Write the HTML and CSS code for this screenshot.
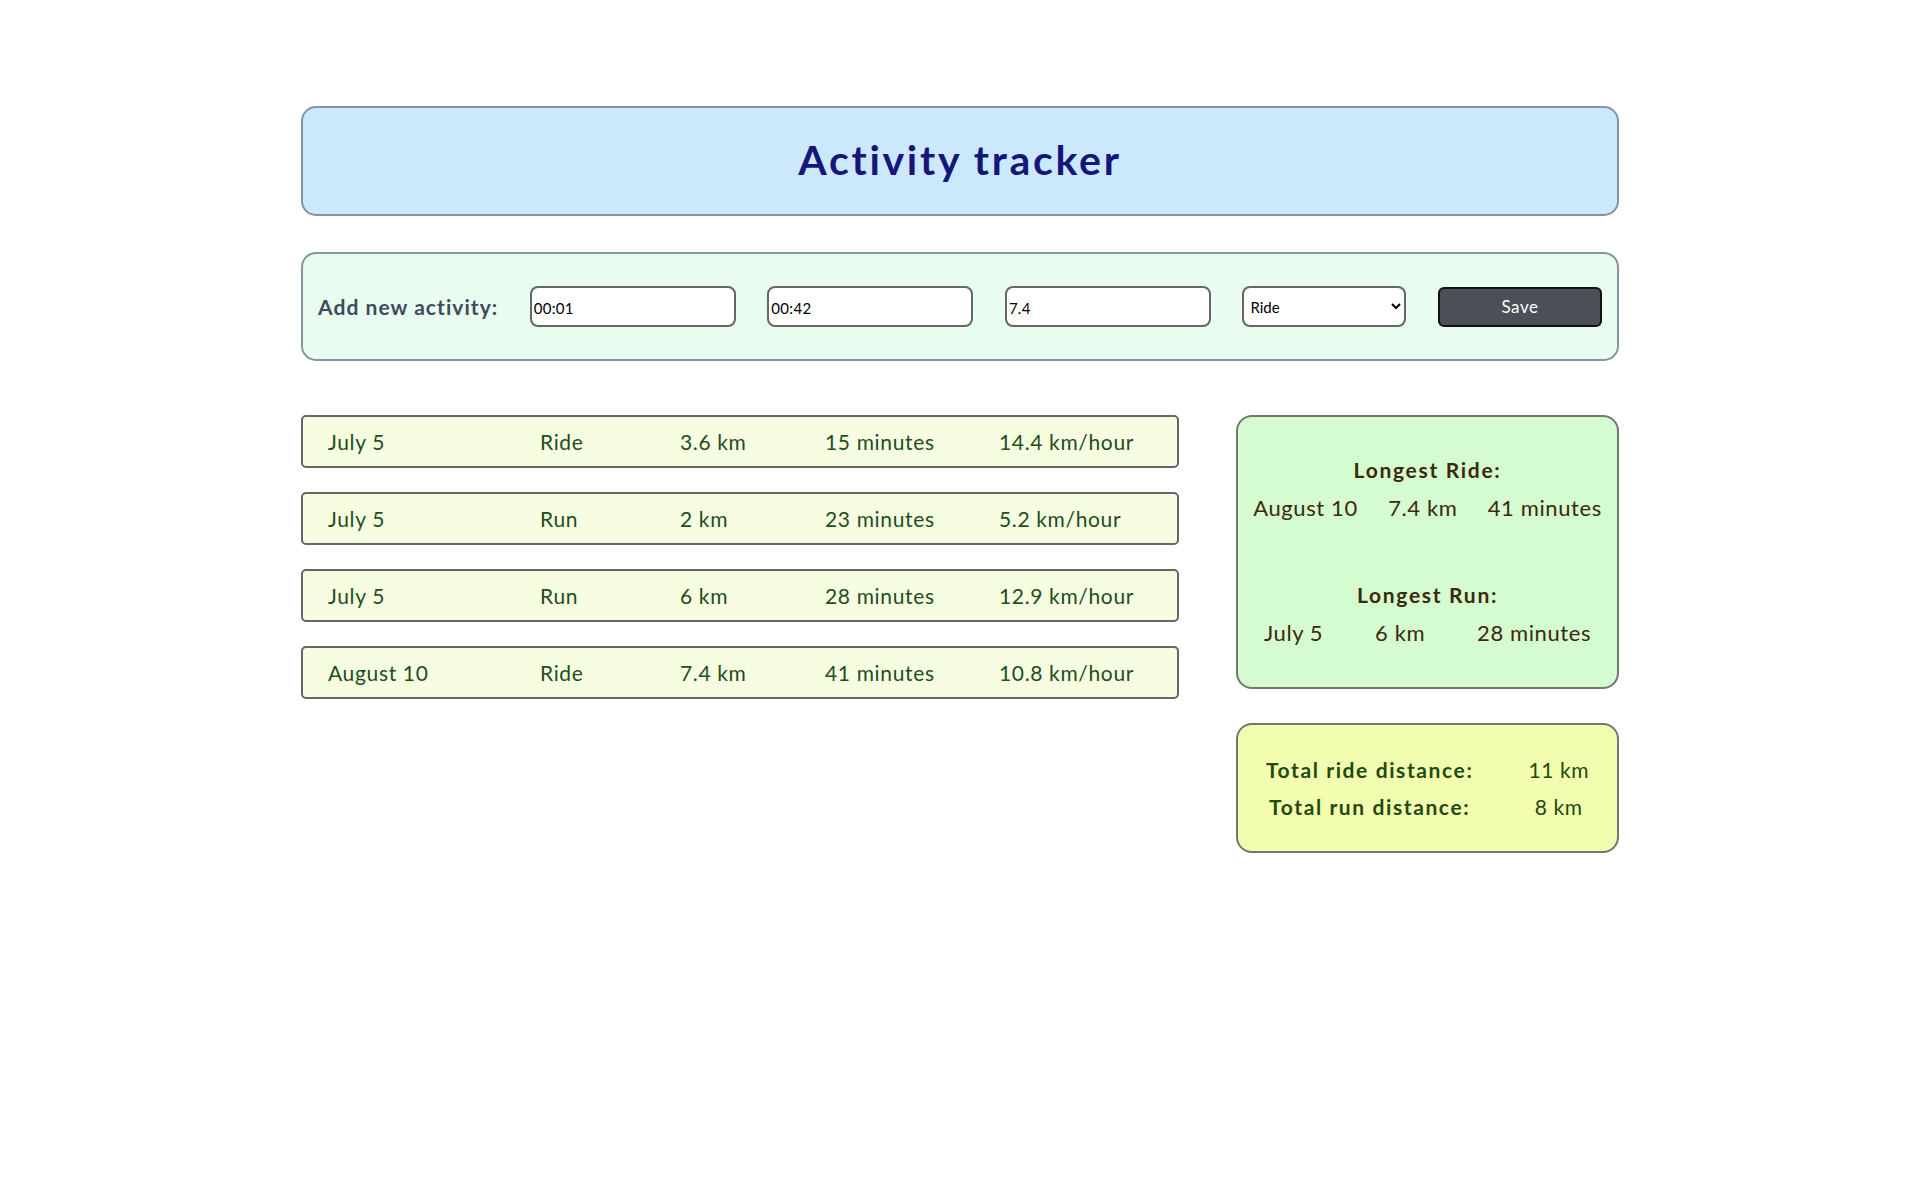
FILE: index.html
```html
<!DOCTYPE html>
<html lang="en">
<head>
<meta charset="utf-8">
<title>Activity tracker</title>
<link rel="stylesheet" href="styles.css">
</head>
<body>
<div class="app">
  <header class="header">
    <h1 class="title">Activity tracker</h1>
  </header>

  <form class="add-form">
    <label class="add-label">Add new activity:</label>
    <input class="field" type="text" value="00:01">
    <input class="field" type="text" value="00:42">
    <input class="field" type="text" value="7.4">
    <select class="select">
      <option>Ride</option>
      <option>Run</option>
    </select>
    <button class="save" type="button">Save</button>
  </form>

  <main class="main">
    <section class="list">
      <div class="row"><span>July 5</span><span>Ride</span><span>3.6 km</span><span>15 minutes</span><span>14.4 km/hour</span></div>
      <div class="row"><span>July 5</span><span>Run</span><span>2 km</span><span>23 minutes</span><span>5.2 km/hour</span></div>
      <div class="row"><span>July 5</span><span>Run</span><span>6 km</span><span>28 minutes</span><span>12.9 km/hour</span></div>
      <div class="row"><span>August 10</span><span>Ride</span><span>7.4 km</span><span>41 minutes</span><span>10.8 km/hour</span></div>
    </section>

    <aside class="side">
      <div class="longest">
        <div class="group">
          <div class="group-title">Longest Ride:</div>
          <div class="group-row"><span>August 10</span><span>7.4 km</span><span>41 minutes</span></div>
        </div>
        <div class="group">
          <div class="group-title">Longest Run:</div>
          <div class="group-row"><span>July 5</span><span>6 km</span><span>28 minutes</span></div>
        </div>
      </div>

      <div class="totals">
        <span class="total-label">Total ride distance:</span><span class="total-value">11 km</span>
        <span class="total-label">Total run distance:</span><span class="total-value">8 km</span>
      </div>
    </aside>
  </main>
</div>
</body>
</html>
```

FILE: styles.css
```css
* {
  box-sizing: border-box;
}

body {
  margin: 0;
  background: #ffffff;
  font-family: Lato, "Open Sans", sans-serif;
}

.app {
  width: 1318px;
  margin: 106px auto 0;
}

.header {
  height: 110px;
  background: #cbe8fc;
  border: 2px solid #8793a3;
  border-radius: 15px;
  display: flex;
  align-items: center;
  justify-content: center;
  padding-bottom: 3px;
}

.title {
  margin: 0;
  font-size: 41px;
  font-weight: 700;
  color: #16167a;
  letter-spacing: 2.7px;
}

.add-form {
  margin-top: 36px;
  height: 109px;
  background: #e8fdf0;
  border: 2px solid #8793a3;
  border-radius: 15px;
  display: flex;
  align-items: center;
  justify-content: space-between;
  padding: 0 15px 0 15px;
}

.add-label {
  font-size: 21px;
  font-weight: 700;
  color: #3f4a5c;
  letter-spacing: 1.05px;
}

.field {
  width: 206px;
  height: 41px;
  border: 2px solid #666666;
  border-radius: 8px;
  background: #ffffff;
  padding: 2px 2px 0;
  font-family: Lato, sans-serif;
  font-size: 15px;
  letter-spacing: 0.3px;
  color: #000000;
}

.select {
  width: 164px;
  height: 41px;
  border: 2px solid #666666;
  border-radius: 8px;
  background: #ffffff;
  font-family: Lato, sans-serif;
  font-size: 15px;
  color: #000000;
  padding: 0 2px;
}

.save {
  width: 164px;
  height: 40px;
  background: #4a4f58;
  border: 2px solid #111111;
  border-radius: 6px;
  color: #ffffff;
  font-family: Lato, sans-serif;
  font-size: 17px;
  letter-spacing: 0.5px;
}

.main {
  margin-top: 54px;
  display: flex;
  gap: 57px;
  align-items: flex-start;
}

.list {
  width: 878px;
  display: flex;
  flex-direction: column;
  gap: 24px;
}

.row {
  height: 53px;
  background: #f6fde0;
  border: 2px solid #666666;
  border-radius: 5px;
  display: grid;
  grid-template-columns: 212px 140px 145px 174px 1fr;
  align-items: center;
  padding-left: 25px;
  font-size: 21px;
  letter-spacing: 0.65px;
  color: #1f4d1c;
}

.side {
  width: 383px;
  display: flex;
  flex-direction: column;
  gap: 34px;
}

.longest {
  height: 274px;
  background: #d5fbd0;
  border: 2px solid #707870;
  border-radius: 16px;
  display: flex;
  flex-direction: column;
  justify-content: center;
  gap: 57px;
  color: #3a2a0c;
  padding-bottom: 1px;
}

.group {
  display: flex;
  flex-direction: column;
  gap: 8px;
}

.group-title {
  line-height: 30px;
  text-align: center;
  font-size: 21px;
  font-weight: 700;
  letter-spacing: 1.7px;
}

.group-row {
  line-height: 30px;
  display: flex;
  justify-content: space-around;
  font-size: 22px;
  letter-spacing: 0.6px;
}

.totals {
  height: 130px;
  background: #f2fdb0;
  border: 2px solid #707870;
  border-radius: 16px;
  display: grid;
  grid-template-columns: auto auto;
  justify-content: center;
  align-content: center;
  column-gap: 55px;
  line-height: 37px;
  color: #234a0e;
  font-size: 21px;
  text-align: center;
}

.total-label {
  font-weight: 700;
  letter-spacing: 1.6px;
}

.total-value {
  letter-spacing: 0.6px;
}
```
